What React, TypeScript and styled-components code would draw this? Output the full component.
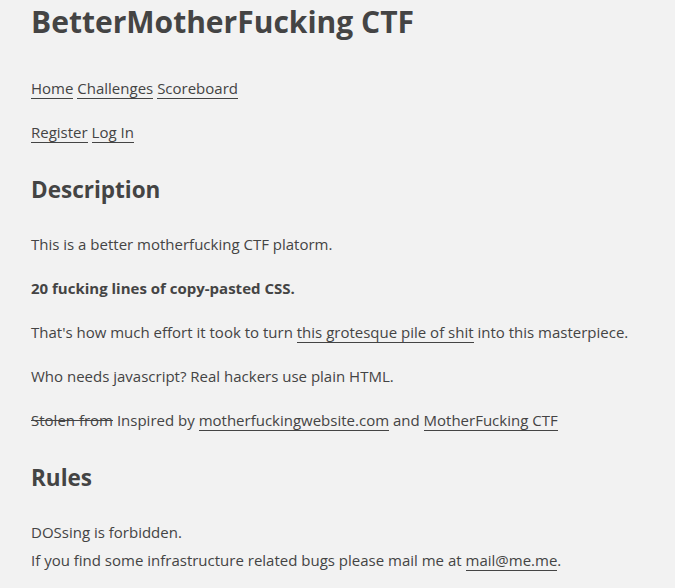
import React from "react";
import styled, { createGlobalStyle } from "styled-components";

const GlobalStyle = createGlobalStyle`
  html, body {
    margin: 0;
    padding: 0;
    background: #f2f2f2;
  }
  body {
    color: #444;
    font-family: "Open Sans", "Noto Sans", sans-serif;
    font-size: 15px;
    line-height: 28px;
  }
`;

const Page = styled.main`
  padding: 4px 31px 0 31px;
  max-width: 650px;
`;

const Title = styled.h1`
  margin: 0 0 34px 0;
  font-size: 30px;
  line-height: 36px;
  font-weight: 700;
`;

const Heading = styled.h2`
  margin: 30px 0 26px 0;
  font-size: 22.5px;
  line-height: 28px;
  font-weight: 700;
`;

const Para = styled.p`
  margin: 16px 0;
`;

const Link = styled.a`
  color: #444;
  text-decoration: none;
  border-bottom: 1px solid #444;
`;

const Struck = styled.s`
  text-decoration: line-through;
`;

export default function App() {
  return (
    <>
      <GlobalStyle />
      <Page>
        <Title>BetterMotherFucking CTF</Title>
        <Para>
          <Link href="#">Home</Link> <Link href="#">Challenges</Link>{" "}
          <Link href="#">Scoreboard</Link>
        </Para>
        <Para>
          <Link href="#">Register</Link> <Link href="#">Log In</Link>
        </Para>
        <Heading>Description</Heading>
        <Para>This is a better motherfucking CTF platorm.</Para>
        <Para>
          <strong>20 fucking lines of copy-pasted CSS.</strong>
        </Para>
        <Para>
          That's how much effort it took to turn{" "}
          <Link href="#">this grotesque pile of shit</Link> into this masterpiece.
        </Para>
        <Para>Who needs javascript? Real hackers use plain HTML.</Para>
        <Para>
          <Struck>Stolen from</Struck> Inspired by{" "}
          <Link href="#">motherfuckingwebsite.com</Link> and{" "}
          <Link href="#">MotherFucking CTF</Link>
        </Para>
        <Heading>Rules</Heading>
        <Para>
          DOSsing is forbidden.
          <br />
          If you find some infrastructure related bugs please mail me at{" "}
          <Link href="#">mail@me.me</Link>.
        </Para>
      </Page>
    </>
  );
}
